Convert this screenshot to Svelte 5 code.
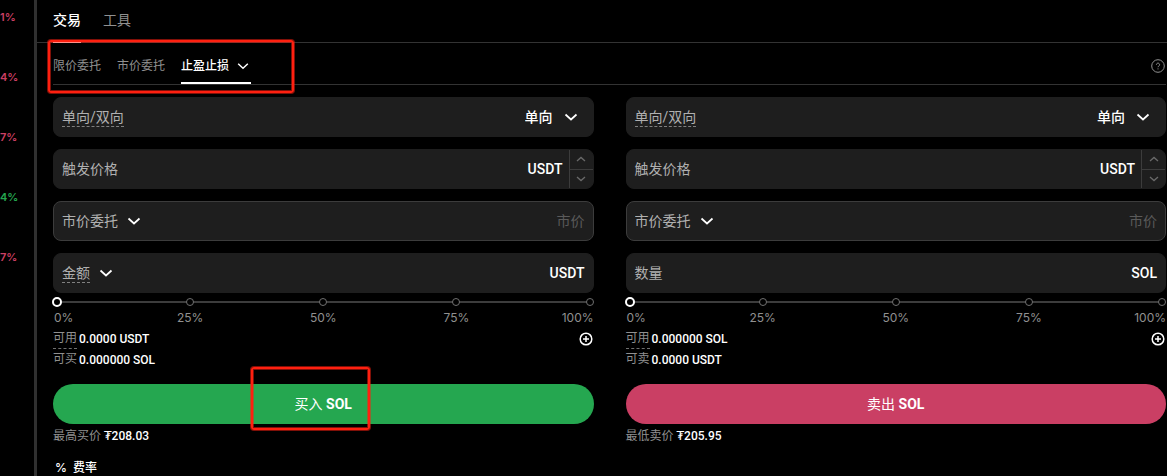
<script>
    const changes = [
        { value: '1%', up: false },
        { value: '4%', up: false },
        { value: '7%', up: false },
        { value: '4%', up: true },
        { value: '7%', up: false }
    ];

    const steps = [0, 25, 50, 75, 100];

    let sides = $state([
        {
            id: 'buy',
            direction: 'single',
            order: 'market',
            amountLabel: '金额',
            switchable: true,
            unit: 'USDT',
            percent: 0,
            available: '0.0000 USDT',
            limitLabel: '可买',
            limit: '0.000000 SOL',
            action: '买入',
            priceLabel: '最高买价',
            price: '₮208.03'
        },
        {
            id: 'sell',
            direction: 'single',
            order: 'market',
            amountLabel: '数量',
            switchable: false,
            unit: 'SOL',
            percent: 0,
            available: '0.000000 SOL',
            limitLabel: '可卖',
            limit: '0.0000 USDT',
            action: '卖出',
            priceLabel: '最低卖价',
            price: '₮205.95'
        }
    ]);
</script>

{#snippet chevron()}
    <svg class="chevron" viewBox="0 0 16 16" aria-hidden="true"><path d="M2.5 5.5 8 10.5l5.5-5" /></svg>
{/snippet}

<div class="page">
    <aside>
        {#each changes as change}
            <span class:up={change.up}>{change.value}</span>
        {/each}
    </aside>

    <main>
        <nav class="tabs">
            <button class="active">交易</button>
            <button>工具</button>
        </nav>

        <div class="content">
            <nav class="order-types">
                <button>限价委托</button>
                <button>市价委托</button>
                <button class="active">止盈止损 {@render chevron()}</button>
                <button class="help" aria-label="帮助">
                    <svg viewBox="0 0 14 14" aria-hidden="true">
                        <circle cx="7" cy="7" r="6.3" />
                        <path d="M5.4 5.7a1.6 1.6 0 1 1 2.4 1.4C7.2 7.4 7 7.6 7 8.2M7 9.4v1" />
                    </svg>
                </button>
            </nav>

            <div class="sides">
                {#each sides as side}
                    <form class={side.id} onsubmit={(e) => e.preventDefault()}>
                        <div class="field">
                            <label class="hint" for="{side.id}-direction">单向/双向</label>
                            <div class="picker end">
                                <select id="{side.id}-direction" bind:value={side.direction}>
                                    <option value="single">单向</option>
                                    <option value="double">双向</option>
                                </select>
                                {@render chevron()}
                            </div>
                        </div>

                        <div class="field">
                            <label for="{side.id}-trigger">触发价格</label>
                            <input id="{side.id}-trigger" type="text" />
                            <span class="unit">USDT</span>
                            <div class="stepper">
                                <button type="button" aria-label="增加">
                                    <svg viewBox="0 0 10 6" aria-hidden="true"><path d="M1 5l4-3.6L9 5" /></svg>
                                </button>
                                <button type="button" aria-label="减少">
                                    <svg viewBox="0 0 10 6" aria-hidden="true"><path d="M1 1l4 3.6L9 1" /></svg>
                                </button>
                            </div>
                        </div>

                        <div class="field outlined">
                            <div class="picker muted">
                                <select aria-label="委托类型" bind:value={side.order}>
                                    <option value="market">市价委托</option>
                                    <option value="limit">限价委托</option>
                                </select>
                                {@render chevron()}
                            </div>
                            <input type="text" aria-label="委托价格" placeholder="市价" disabled />
                        </div>

                        <div class="field">
                            <label class:hint={side.switchable} for="{side.id}-amount">{side.amountLabel}</label>
                            {#if side.switchable}
                                <button class="switch" type="button" aria-label="切换单位">{@render chevron()}</button>
                            {/if}
                            <input id="{side.id}-amount" type="text" />
                            <span class="unit">{side.unit}</span>
                        </div>

                        <div class="slider">
                            <div class="marks">
                                {#each steps as step}
                                    <i></i>
                                {/each}
                            </div>
                            <input type="range" min="0" max="100" aria-label="百分比" bind:value={side.percent} />
                        </div>
                        <div class="percents">
                            {#each steps as step}
                                <span>{step}%</span>
                            {/each}
                        </div>

                        <div class="balance">
                            <span><span class="hint">可用</span> <b>{side.available}</b></span>
                            <button class="add" type="button" aria-label="充值">
                                <svg viewBox="0 0 14 14" aria-hidden="true">
                                    <circle cx="7" cy="7" r="5.8" />
                                    <path d="M7 4v6M4 7h6" />
                                </svg>
                            </button>
                        </div>
                        <div class="balance">
                            <span><span>{side.limitLabel}</span> <b>{side.limit}</b></span>
                        </div>

                        <div class="action">
                            <button class="submit">{side.action} <strong>SOL</strong></button>
                            {#if side.id === 'buy'}
                                <div class="mark mark-submit"></div>
                            {/if}
                        </div>
                        <p class="price">{side.priceLabel} <b>{side.price}</b></p>
                    </form>
                {/each}
            </div>

            <a class="fee" href="#fee"><span>%</span> 费率</a>
        </div>

        <div class="mark mark-types"></div>
    </main>
</div>

<style>
    :global(body) {
        background: #000;
    }

    .page {
        display: flex;
        height: 100vh;
        overflow: hidden;
        background: #000;
        color: #fff;
        font: 14px/20px Roboto, "Noto Sans CJK SC", "DejaVu Sans", sans-serif;
    }

    button, input, select {
        margin: 0;
        padding: 0;
        border: 0;
        background: none;
        color: inherit;
        font: inherit;
    }

    button, select {
        cursor: pointer;
    }

    svg {
        display: block;
        fill: none;
        stroke: currentColor;
    }

    .chevron {
        width: 16px;
        height: 16px;
        color: #fff;
        stroke-width: 1.7;
        pointer-events: none;
    }

    aside {
        width: 34px;
        padding-top: 7px;
        display: flex;
        flex-direction: column;
        gap: 40px;
        color: #ca3f64;
        font-family: Inter, sans-serif;
        font-size: 11px;
        font-weight: 600;
    }

    .up {
        color: #25a750;
    }

    main {
        position: relative;
        flex: 1;
        min-width: 0;
        border-left: 3px solid #303030;
    }

    .tabs {
        display: flex;
        gap: 22px;
        height: 42px;
        padding: 0 16px;
        border-bottom: 1px solid #333;
        color: #909090;
    }

    .tabs button {
        height: 43px;
        padding-bottom: 2px;
        border-bottom: 1px solid transparent;
    }

    .tabs .active {
        border-color: #fff;
        color: #fff;
        font-weight: 500;
    }

    .content {
        padding: 0 1px 0 16px;
    }

    .order-types {
        display: flex;
        gap: 16px;
        height: 41px;
        border-bottom: 1px solid #333;
        color: #909090;
        font-size: 12px;
    }

    .order-types button {
        display: flex;
        align-items: center;
        gap: 6px;
        padding-top: 5px;
    }

    .order-types .active {
        padding: 7px 1px 0 0;
        gap: 7px;
        border-bottom: 2px solid #fff;
        color: #fff;
        font-weight: 500;
    }

    .order-types .chevron {
        width: 14px;
        height: 14px;
    }

    .order-types .help {
        margin-left: auto;
        padding-right: 1px;
    }

    .help svg, .add svg {
        width: 14px;
        height: 14px;
    }

    .add svg {
        stroke-width: 1.5;
    }

    .sides {
        display: grid;
        grid-template-columns: 1fr 1fr;
        gap: 32px;
        padding-top: 12px;
    }

    .field {
        display: flex;
        align-items: center;
        box-sizing: border-box;
        height: 40px;
        margin-bottom: 12px;
        padding: 0 8px;
        border: 1px solid #1e1e1e;
        border-radius: 8px;
        background: #1e1e1e;
    }

    .outlined {
        border-color: #3c3c3c;
    }

    .field label, .muted select {
        color: #b0b0b0;
    }

    .hint {
        border-bottom: 1px dashed #808080;
    }

    .field label.hint {
        line-height: 18px;
        padding-top: 1px;
    }

    .field input {
        flex: 1;
        min-width: 0;
        text-align: right;
        outline: none;
    }

    .field input::placeholder {
        color: #5a5a5a;
    }

    .picker {
        display: grid;
        align-items: center;
    }

    .picker > * {
        grid-area: 1 / 1;
    }

    .picker select {
        appearance: none;
        padding-right: 24px;
        outline: none;
    }

    .picker option {
        background: #1e1e1e;
    }

    .picker .chevron {
        justify-self: end;
    }

    .end {
        margin: 0 6px 0 auto;
        font-weight: 500;
    }

    .end select {
        padding-right: 26px;
    }

    .switch {
        margin-left: 8px;
    }

    .unit {
        font-weight: 500;
    }

    .stepper {
        display: flex;
        flex-direction: column;
        align-self: stretch;
        width: 23px;
        margin: 0 -8px 0 6px;
        border-left: 1px solid #3c3c3c;
        color: #6a6a6a;
    }

    .stepper button {
        display: flex;
        flex: 1;
        align-items: center;
        justify-content: center;
    }

    .stepper button + button {
        border-top: 1px solid #3c3c3c;
    }

    .stepper svg {
        width: 10px;
        height: 6px;
        stroke-width: 1.3;
    }

    .slider {
        display: grid;
        margin-top: -8px;
    }

    .slider > * {
        grid-area: 1 / 1;
    }

    .marks {
        display: flex;
        justify-content: space-between;
        align-items: center;
        height: 10px;
        background: linear-gradient(#3c3c3c, #3c3c3c) center / calc(100% - 8px) 2px no-repeat;
    }

    .marks i {
        box-sizing: border-box;
        width: 8px;
        height: 8px;
        border: 1px solid #707070;
        border-radius: 50%;
        background: #000;
    }

    .slider input {
        appearance: none;
        width: 100%;
        height: 10px;
        margin-left: -1px;
        cursor: pointer;
    }

    .slider input::-webkit-slider-thumb {
        appearance: none;
        box-sizing: border-box;
        width: 10px;
        height: 10px;
        border: 2px solid #fff;
        border-radius: 50%;
        background: #000;
    }

    .percents {
        display: flex;
        color: #909090;
        font-family: Inter, sans-serif;
        font-size: 12px;
        line-height: 21px;
    }

    /* outer labels take half a step, so the inner ones centre under their marks */
    .percents span {
        flex: 2 0 0;
        text-align: center;
    }

    .percents span:first-child {
        flex: 1 0 4px;
        text-indent: 1px;
        text-align: left;
    }

    .percents span:last-child {
        flex: 1 0 4px;
        text-align: right;
    }

    .balance {
        display: flex;
        align-items: center;
        justify-content: space-between;
        height: 21px;
        color: #909090;
        font-size: 12px;
        line-height: 18px;
    }

    .balance > span {
        display: flex;
        gap: 2px;
    }

    .balance .hint {
        border-color: #707070;
    }

    .balance b {
        line-height: 20px;
    }

    .balance .add {
        margin-right: 1px;
        color: #fff;
    }

    b {
        color: #fff;
        font-weight: 500;
    }

    .action {
        position: relative;
        margin-top: 14px;
    }

    .submit {
        display: block;
        width: 100%;
        height: 40px;
        border-radius: 20px;
        background: #25a750;
    }

    .sell .submit {
        background: #ca3f64;
    }

    .price {
        margin: 2px 0 0;
        color: #909090;
        font-size: 12px;
    }

    .fee {
        display: flex;
        gap: 6px;
        margin-top: 12px;
        padding-left: 2px;
        color: #fff;
        font-size: 12px;
        font-weight: 500;
        text-decoration: none;
    }

    .fee span {
        font-family: Inter, sans-serif;
    }

    .mark {
        position: absolute;
        box-sizing: border-box;
        border: 2px solid #ff2010;
        border-radius: 3px;
        box-shadow: 0 0 0 1px #ff201080, inset 0 0 0 1px #ff201080;
        pointer-events: none;
    }

    .mark-types {
        top: 40px;
        left: 11px;
        width: 246px;
        height: 53px;
    }

    .mark-submit {
        top: -17px;
        left: 198px;
        width: 119px;
        height: 63px;
    }
</style>
